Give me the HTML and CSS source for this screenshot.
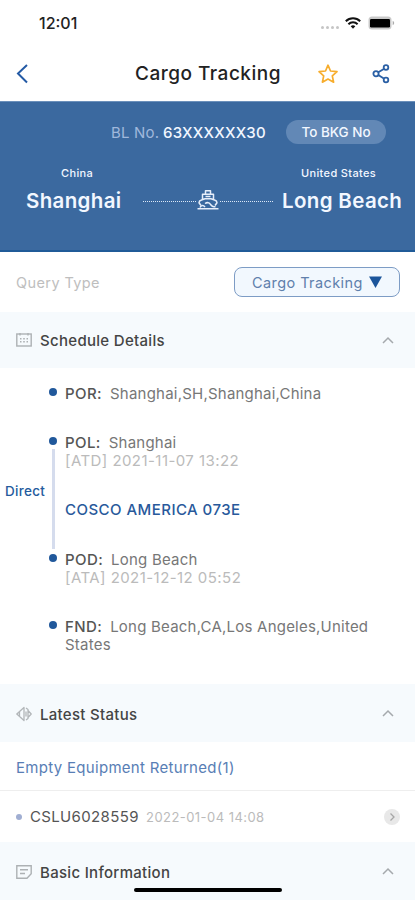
FILE: index.html
```html
<!DOCTYPE html>
<html lang="en">
<head>
<meta charset="utf-8">
<meta name="viewport" content="width=device-width, initial-scale=1">
<title>Cargo Tracking</title>
<link rel="stylesheet" href="styles.css">
</head>
<body>
<div class="screen">
  <div class="status-bar">
    <span class="clock">12:01</span>
    <div class="signals">
      <span class="cell"><i></i><i></i><i></i><i></i></span>
      <svg class="wifi" viewBox="0 0 16 12" width="16" height="12" fill="none" stroke="#111" stroke-width="2"><path d="M.8 4.2a10.4 10.4 0 0 1 14.4 0"/><path d="M3.4 7.2a6.6 6.6 0 0 1 9.2 0"/><path d="M5.7 9.2a3.4 3.4 0 0 1 4.6 0L8 11.7z" fill="#111" stroke="none"/></svg>
      <svg class="battery" viewBox="0 0 27 14" width="27" height="14"><rect x=".5" y=".5" width="23" height="13" rx="3.5" fill="#c9c9c9"/><rect x="2" y="3" width="20" height="8.5" rx="1.2" fill="#000"/><path d="M24.7 4.8c2 .8 2 3.6 0 4.4z" fill="#aaa"/></svg>
    </div>
  </div>
  <header class="nav">
    <svg class="back" viewBox="0 0 12 20" width="12" height="20" fill="none" stroke="#245aa5" stroke-width="2"><path d="M11 1 2 9.500l9 9"/></svg>
    <h1>Cargo Tracking</h1>
    <svg class="star" viewBox="0 0 22 20" width="22" height="20" fill="none" stroke="#f7ad2d" stroke-width="1.7" stroke-linejoin="round"><path d="m11 1.200 2.500 5.800 6.500.7-4.700 4.200 1.300 6.300-5.600-3.200-5.600 3.200 1.300-6.300L2 7.700l6.500-.7z"/></svg>
    <svg class="share" viewBox="0 0 18 20" width="18" height="20" fill="none" stroke="#2b60a5" stroke-width="1.800"><circle cx="4" cy="9.700" r="2.600"/><circle cx="14" cy="3.500" r="2.300"/><circle cx="14" cy="16" r="2.300"/><path d="m6.300 8.300 5.500-3.400M6.300 11.100l5.500 3.500"/></svg>
  </header>
  <section class="hero">
    <div class="bill">
      <span class="bill-label">BL No.</span>
      <span class="bill-number">63XXXXXX30</span>
      <span class="pill">To BKG No</span>
    </div>
    <div class="route">
      <div class="port port-from"><span class="country">China</span><span class="city">Shanghai</span></div>
      <div class="voyage">
        <span class="dots"></span>
        <svg viewBox="0 0 24 22" width="24" height="22" fill="none" stroke="#e7eefa" stroke-width="1.500" stroke-linejoin="round"><path d="M9.500 5V1.700h5V5M6.500 10V5.200h11V10M5 16.500l-2-2.800c0-1.500 1-2.200 2.500-2.700L9 9.800h6l3.500 1.200c1.500.5 2.500 1.200 2.500 2.700l-2 2.800M9.500 7.500h5"/><path d="M1.500 19.800h21M4 18.500c1-2.500 3.500-2.500 5-.5M9 14.500c3-2 5 0 6 1.500s3 2 4.500 1.500"/></svg>
        <span class="dots"></span>
      </div>
      <div class="port port-to"><span class="country">United States</span><span class="city">Long Beach</span></div>
    </div>
  </section>
  <div class="query">
    <span class="query-label">Query Type</span>
    <span class="select"><span>Cargo Tracking</span><svg viewBox="0 0 13 12" width="13" height="12"><path d="M0 .5h13L6.500 12z" fill="#1c559b"/></svg></span>
  </div>
  <div class="section-head schedule">
    <svg class="icon" viewBox="0 0 16 16" width="16" height="16" fill="none" stroke="#adb1b4" stroke-width="1.400"><rect x=".8" y="2" width="14.400" height="12"/><path d="M4 1v2.500M12 1v2.500M4 6.800h1.500M7.200 6.800h1.600M10.500 6.800H12M4 9.800h1.500M7.200 9.800h1.600M10.500 9.800H12"/></svg>
    <h2>Schedule Details</h2>
    <svg class="chevron" viewBox="0 0 12 8" width="12" height="8"><path d="m1 7 5-5 5 5"/></svg>
  </div>
  <div class="timeline">
    <div class="stop"><span class="rail"><i></i></span><p class="place"><b>POR:</b><span>Shanghai,SH,Shanghai,China</span></p></div>
    <div class="leg">
      <span class="direct">Direct</span>
      <span class="rail"><i></i><em></em></span>
      <div class="leg-body">
        <p class="place"><b>POL:</b><span>Shanghai</span></p>
        <p class="time">[ATD] 2021-11-07 13:22</p>
        <p class="vessel">COSCO AMERICA 073E</p>
      </div>
    </div>
    <div class="stop"><span class="rail"><i></i></span><div><p class="place"><b>POD:</b><span>Long Beach</span></p><p class="time">[ATA] 2021-12-12 05:52</p></div></div>
    <div class="stop fnd"><span class="rail"><i></i></span><p class="place"><b>FND:</b><span>Long Beach,CA,Los Angeles,United<br></span>States</p></div>
  </div>
  <div class="section-head latest">
    <svg class="icon" viewBox="0 0 16 16" width="16" height="16" fill="none" stroke="#b2b6b9" stroke-width="1.300" stroke-linejoin="round"><path d="M8 1.500.8 8 8 14.500zM3.500 6v4M10 2l2 1.500v9L10 14M10 5.500v5M12 4.500 15.200 8 12 11.500"/></svg>
    <h2>Latest Status</h2>
    <svg class="chevron" viewBox="0 0 12 8" width="12" height="8"><path d="m1 7 5-5 5 5"/></svg>
  </div>
  <div class="event">Empty Equipment Returned(1)</div>
  <div class="container-row">
    <i class="bullet"></i><span class="container-no">CSLU6028559</span><span class="container-time">2022-01-04 14:08</span>
    <svg class="go" viewBox="0 0 16 16" width="16" height="16"><circle cx="8" cy="8" r="8" fill="#e8e8e8"/><path d="m6.500 4.500 3.500 3.500-3.500 3.500" fill="none" stroke="#a6a6a6" stroke-width="1.300"/></svg>
  </div>
  <div class="section-head basic">
    <svg class="icon" viewBox="0 0 16 16" width="16" height="16" fill="none" stroke="#adb1b4" stroke-width="1.400"><path d="M.8 1.800h14.400v8L11 14.300H.8zM4 5.800h8M4 9.500h5"/></svg>
    <h2>Basic Information</h2>
    <svg class="chevron" viewBox="0 0 12 8" width="12" height="8"><path d="m1 7 5-5 5 5"/></svg>
  </div>
  <div class="home-indicator"></div>
</div>
</body>
</html>
```
FILE: styles.css
```css
* { box-sizing: border-box; }
body { margin: 0; background: #fff; font-family: Inter, "Liberation Sans", sans-serif; }
h1, h2, p { margin: 0; }
svg { flex: none; display: block; }
.screen { position: relative; width: 415px; height: 900px; overflow: hidden; white-space: nowrap; }

.status-bar { height: 46px; padding: 0 20px 0 39px; display: flex; align-items: center; justify-content: space-between; }
.clock { font-size: 16px; font-weight: 500; color: #222; }
.signals { display: flex; align-items: center; }
.cell { display: flex; gap: 2px; margin: 8px 6px 0 0; }
.cell i { width: 3px; height: 3px; border-radius: 50%; background: #c5c5c5; }
.wifi { margin-right: 7px; }

.nav { height: 55px; display: flex; align-items: center; padding-left: 16px; }
.nav h1 { margin-left: 107px; width: 147px; padding-top: 1px; font-size: 19px; line-height: 26px; font-weight: 500; letter-spacing: .5px; color: #222; }
.star { margin-left: 35px; }
.share { margin-left: 33px; }

.hero { height: 151px; background: #3b699f; border-top: 1px solid #6b90bb; border-bottom: 2px solid #205b98; color: #f2f7ff; }
.bill { height: 24px; margin-top: 18px; padding-left: 111px; display: flex; align-items: center; }
.bill-label { width: 52px; font-size: 15px; letter-spacing: .2px; color: #a0b8dc; }
.bill-number { width: 103px; font-size: 15px; font-weight: 500; letter-spacing: .25px; }
.pill { margin-left: 20px; width: 100px; height: 24px; border-radius: 12px; background: #6288b6; font-size: 13.500px; line-height: 24px; font-weight: 500; text-align: center; }
.route { margin-top: 22px; display: flex; align-items: flex-start; padding-left: 26px; }
.port { display: flex; flex-direction: column; }
.port-from { width: 117px; }
.country { font-size: 11px; line-height: 14px; font-weight: 500; letter-spacing: .35px; }
.port-from .country { padding-left: 35px; }
.port-to .country { padding-left: 19px; }
.city { margin-top: 8px; font-size: 20.500px; line-height: 26px; font-weight: 600; letter-spacing: .35px; }
.voyage { width: 139px; margin-top: 23px; display: flex; align-items: center; }
.dots { width: 53px; margin-top: 3px; border-top: 1px dotted #dce8f7; }

.query { height: 60px; padding: 0 15px 0 16px; display: flex; align-items: center; justify-content: space-between; }
.query-label { font-size: 14.500px; letter-spacing: .4px; color: #bebebe; }
.select { width: 166px; height: 30px; border: 1px solid #7d9cc5; border-radius: 8px; background: #f2f8fe; display: flex; align-items: center; padding-left: 17px; font-size: 14.500px; letter-spacing: .42px; color: #6080ac; }
.select span { width: 117px; }

.section-head { background: #f6fafd; display: flex; align-items: center; padding: 0 21px 0 16px; }
.schedule { height: 56px; }
.latest { height: 58px; }
.basic { height: 58px; }
.section-head h2 { margin-left: 8px; flex: 1; padding-top: 1px; font-size: 15px; font-weight: 500; letter-spacing: .3px; color: #444; }
.latest .icon, .basic .icon { margin-top: 1px; }
.latest h2, .basic h2 { padding-top: 2px; }
.chevron { fill: none; stroke: #a5a9ad; stroke-width: 1.500; }

.timeline { height: 316px; padding-top: 17px; font-size: 15px; line-height: 18px; letter-spacing: .22px; color: #777; }
.place b { font-weight: 500; color: #555; letter-spacing: .4px; margin-right: 8px; }
.stop { display: flex; padding-left: 49px; }
.rail { width: 8px; margin-right: 8px; padding-top: 3px; display: flex; flex-direction: column; align-items: center; }
.rail i { width: 8px; height: 8px; border-radius: 50%; background: #20589b; flex: none; }
.rail em { width: 3px; flex: 1; margin: 4px 0 2px; background: #d5dced; }
.leg { display: flex; height: 117px; margin-top: 31px; padding-left: 5px; }
.direct { width: 44px; padding-top: 48px; font-size: 13.500px; font-weight: 500; letter-spacing: .3px; color: #245b9d; }
.time { color: #bbb; letter-spacing: .44px; }
.vessel { margin-top: 31px; font-weight: 500; letter-spacing: .46px; color: #28599b; }
.fnd { margin-top: 31px; }

.event { height: 49px; padding-left: 16px; border-bottom: 1px solid #eee; font-size: 15px; line-height: 51px; letter-spacing: .3px; color: #587eb5; }
.container-row { height: 51px; display: flex; align-items: center; padding: 0 15px 0 16px; }
.bullet { width: 6px; height: 6px; border-radius: 50%; background: #a0aed2; margin-right: 8px; }
.container-no { width: 116px; font-size: 15px; letter-spacing: .35px; color: #555; }
.container-time { flex: 1; font-size: 13px; letter-spacing: .45px; color: #bbb; }
.home-indicator { position: absolute; left: 134px; top: 888px; width: 148px; height: 4px; border-radius: 2px; background: #000; }
```
